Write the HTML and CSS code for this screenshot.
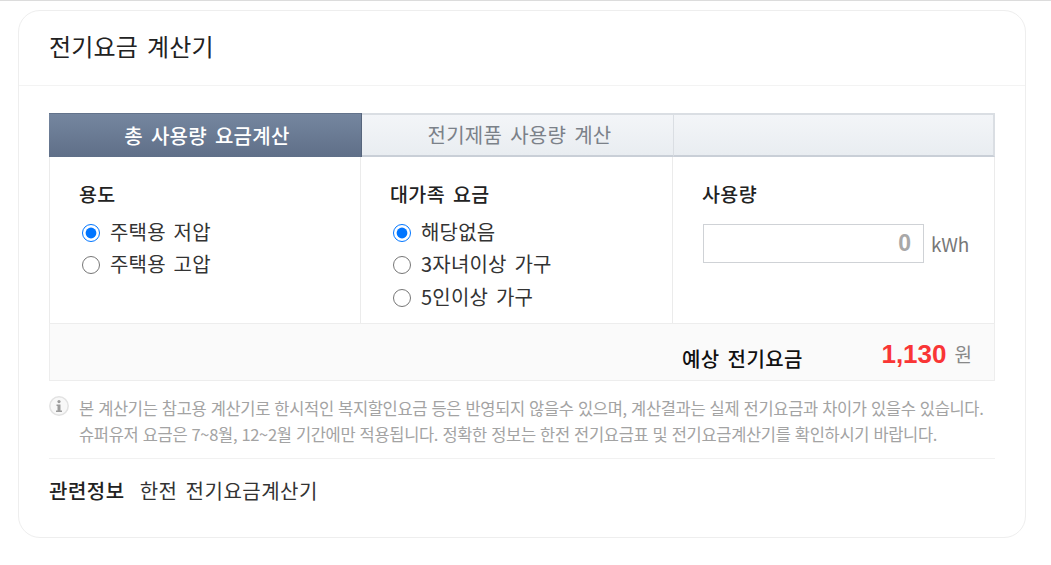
FILE: index.html
```html
<!DOCTYPE html>
<html lang="ko">
<head>
    <meta charset="UTF-8">
    <title>전기요금 계산기</title>
    <link rel="stylesheet" href="styles.css">
</head>
<body>
    <div class="card">
        <h2 class="card-title">전기요금 계산기</h2>
        <div class="card-body">
            <div class="tabs">
                <div class="tab active">총 사용량 요금계산</div>
                <div class="tab">전기제품 사용량 계산</div>
                <div class="tab"></div>
            </div>
            <div class="panel">
                <div class="col">
                    <div class="col-title">용도</div>
                    <label class="radio"><input type="radio" name="use" checked>주택용 저압</label>
                    <label class="radio"><input type="radio" name="use">주택용 고압</label>
                </div>
                <div class="col">
                    <div class="col-title">대가족 요금</div>
                    <label class="radio"><input type="radio" name="family" checked>해당없음</label>
                    <label class="radio"><input type="radio" name="family">3자녀이상 가구</label>
                    <label class="radio"><input type="radio" name="family">5인이상 가구</label>
                </div>
                <div class="col">
                    <div class="col-title">사용량</div>
                    <div class="usage">
                        <input class="usage-input" type="text" value="0">
                        <span class="unit">kWh</span>
                    </div>
                </div>
            </div>
            <div class="result">
                <span class="result-label">예상 전기요금</span>
                <span class="result-value">1,130</span>
                <span class="result-unit">원</span>
            </div>
            <div class="note">
                <svg class="note-icon" width="20" height="20" viewBox="0 0 20 20">
                    <circle cx="10" cy="10" r="9.2" fill="#f8f8f8" stroke="#e2e2e2" stroke-width="1.5"/>
                    <circle cx="10" cy="5.6" r="1.6" fill="#9c9c9c"/>
                    <path d="M7.5 8.5h4v6H13V16H7v-1.5h1.5V10h-1z" fill="#9c9c9c"/>
                </svg>
                <p>본 계산기는 참고용 계산기로 한시적인 복지할인요금 등은 반영되지 않을수 있으며, 계산결과는 실제 전기요금과 차이가 있을수 있습니다.<br>슈퍼유저 요금은 7~8월, 12~2월 기간에만 적용됩니다. 정확한 정보는 한전 전기요금표 및 전기요금계산기를 확인하시기 바랍니다.</p>
            </div>
            <div class="related">
                <strong>관련정보</strong>
                <span>한전 전기요금계산기</span>
            </div>
        </div>
    </div>
</body>
</html>
```

FILE: styles.css
```css
html, body {
    height: 100%;
}
body {
    font-family: "Noto Sans CJK KR", "Noto Sans", sans-serif;
    margin: 0;
    padding: 9px 25px 0 18px;
    border-top: 1px solid #dcdcdc;
    box-sizing: border-box;
    background: white;
    color: #222;
    overflow: hidden;
}
.card {
    height: 528px;
    box-sizing: border-box;
    border: 1px solid #eeeeee;
    border-radius: 22px;
}
.card-title {
    margin: 0;
    height: 75px;
    box-sizing: border-box;
    padding-left: 30px;
    border-bottom: 1px solid #f3f3f3;
    font-size: 24px;
    font-weight: 400;
    letter-spacing: 0.2px;
    word-spacing: 2px;
    line-height: 70px;
    color: #222;
}
.card-body {
    padding: 27px 30px 0;
}
.tabs {
    display: grid;
    grid-template-columns: 313px 312px 1fr;
    height: 44px;
    box-sizing: border-box;
}
.tab {
    box-sizing: border-box;
    padding-left: 4px;
    border: 2px solid #dadee3;
    border-width: 2px 1px 2px 0;
    border-bottom-color: #c9cfd7;
    background: linear-gradient(#f3f5f8, #e9edf1);
    text-align: center;
    font-size: 20px;
    letter-spacing: 0.3px;
    word-spacing: 2px;
    line-height: 40px;
    color: #7b8189;
}
.tab:last-child {
    border-right-width: 2px;
}
.tab.active {
    border: 0;
    border-right: 1px solid #56657c;
    border-top: 1px solid #63738b;
    background: linear-gradient(#75869f, #5f6f88);
    color: white;
    font-weight: 500;
    line-height: 43px;
}
.panel {
    display: grid;
    grid-template-columns: 311px 312px 1fr;
    height: 166px;
    box-sizing: border-box;
    border-left: 1px solid #ebebeb;
    border-right: 1px solid #ebebeb;
}
.col {
    box-sizing: border-box;
    padding: 24px 0 0 29px;
    border-right: 1px solid #ebebeb;
}
.col:last-child {
    border-right: 0;
}
.col-title {
    font-size: 19.5px;
    font-weight: 500;
    letter-spacing: 0.4px;
    word-spacing: 2px;
    line-height: 26px;
    margin-bottom: 8px;
    color: #222;
}
.radio {
    display: flex;
    align-items: center;
    height: 32.5px;
    font-size: 20px;
    letter-spacing: 0.2px;
    word-spacing: 2px;
    color: #333;
}
.radio input {
    width: 18px;
    height: 18px;
    margin: 3px 10px 0 3px;
}
.usage {
    display: flex;
    align-items: center;
    margin: 17px 0 0 1px;
}
.usage-input {
    width: 221px;
    height: 39px;
    box-sizing: border-box;
    border: 1px solid #cfd2d6;
    padding: 0 12px;
    text-align: right;
    font-family: "Liberation Sans", sans-serif;
    font-size: 23px;
    font-weight: bold;
    color: #a8a8a8;
}
.unit {
    margin-left: 7px;
    font-size: 19px;
    letter-spacing: -0.2px;
    color: #777;
}
.result {
    display: flex;
    align-items: center;
    height: 58px;
    box-sizing: border-box;
    padding: 9px 22px 0 0;
    border: 1px solid #ededed;
    background: #fafafa;
}
.result-label {
    margin-left: 632px;
    margin-top: 4px;
    font-size: 20px;
    font-weight: 500;
    letter-spacing: 0.4px;
    word-spacing: 2px;
    color: #111;
}
.result-value {
    margin-left: auto;
    margin-top: -4px;
    font-family: "Liberation Sans", sans-serif;
    font-size: 26px;
    font-weight: bold;
    color: #f93535;
}
.result-unit {
    margin-left: 8px;
    margin-top: -6px;
    font-size: 19px;
    color: #888;
}
.note {
    display: flex;
    padding: 14px 0 11px;
    border-bottom: 1px solid #f1f1f1;
}
.note-icon {
    flex: none;
    margin: 1px 10px 0 0;
}
.note p {
    margin: 0;
    font-size: 16.5px;
    line-height: 26px;
    letter-spacing: -0.33px;
    white-space: nowrap;
    color: #a3a3a3;
}
.related {
    padding-top: 18px;
    font-size: 20px;
    letter-spacing: 0.5px;
    word-spacing: 2px;
    line-height: 28px;
}
.related strong {
    font-weight: 500;
    margin-right: 7px;
}
.related span {
    color: #333;
}
```
